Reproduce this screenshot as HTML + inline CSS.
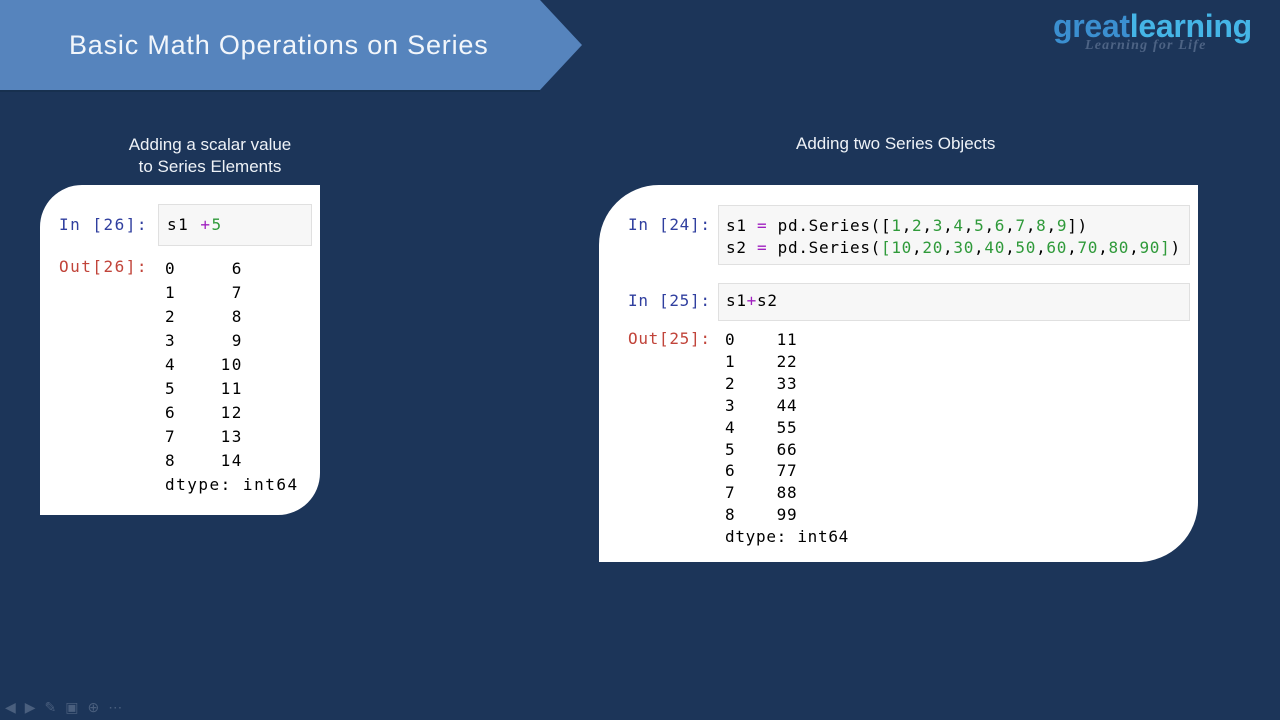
<!DOCTYPE html>
<html><head><style>
body{margin:0;width:1280px;height:720px;background:#1c3559;position:relative;overflow:hidden;font-family:"Liberation Sans",sans-serif}
.a{position:absolute}
.m{font-family:"DejaVu Sans Mono","Liberation Mono",monospace;font-size:16px;white-space:pre}
.L{letter-spacing:1.5px}.R{letter-spacing:0.7px}
.p{color:#303f9f}.o{color:#c1443a}.g{color:#2f9a3a}.v{color:#a020c0}
.cell{background:#f7f7f7;border:1px solid #e0e0e0}
</style></head><body>
<svg class="a" style="left:0;top:0" width="600" height="95"><polygon points="0,0 540,0 582,45 540,90 0,90" fill="#5684bd"/><line x1="0" y1="91" x2="540" y2="91" stroke="#17304f" stroke-width="2"/></svg>
<div class="a" style="left:69px;top:30px;font-size:27px;color:#f2f6fb;letter-spacing:0.8px">Basic Math Operations on Series</div>
<div class="a" style="left:1053px;top:8px;font-size:32px;font-weight:bold;letter-spacing:-0.3px"><span style="color:#3b8fd0">great</span><span style="color:#45b5e6">learning</span></div>
<div class="a" style="left:1085px;top:38px;font-size:14px;font-style:italic;font-family:'Liberation Serif',serif;color:#4d6384;letter-spacing:1.2px;font-weight:bold">Learning for Life</div>
<div class="a" style="left:100px;top:134px;width:220px;text-align:center;color:#eef2f7;font-size:17px;line-height:22px">Adding a scalar value<br>to Series Elements</div>
<div class="a" style="left:796px;top:134px;color:#eef2f7;font-size:17px">Adding two Series Objects</div>

<div class="a" style="left:40px;top:185px;width:280px;height:330px;background:#fff;border-radius:42px 0 42px 0"></div>
<div class="a cell" style="left:158px;top:204px;width:152px;height:40px"></div>
<div class="a m p L" style="left:59px;top:215px">In [26]:</div>
<div class="a m L" style="left:167px;top:215px">s1 <span class="v">+</span><span class="g">5</span></div>
<div class="a m o L" style="left:59px;top:257px">Out[26]:</div>
<div class="a m L" style="left:165px;top:257px;line-height:24px">0     6
1     7
2     8
3     9
4    10
5    11
6    12
7    13
8    14
dtype: int64</div>

<div class="a" style="left:599px;top:185px;width:599px;height:377px;background:#fff;border-radius:60px 0 60px 0"></div>
<div class="a cell" style="left:718px;top:205px;width:470px;height:58px"></div>
<div class="a m p R" style="left:628px;top:215px">In [24]:</div>
<div class="a m R" style="left:726px;top:215px;line-height:22px">s1 <span class="v">=</span> pd.Series([<span class="g">1</span>,<span class="g">2</span>,<span class="g">3</span>,<span class="g">4</span>,<span class="g">5</span>,<span class="g">6</span>,<span class="g">7</span>,<span class="g">8</span>,<span class="g">9</span>])
s2 <span class="v">=</span> pd.Series(<span class="g">[10</span>,<span class="g">20</span>,<span class="g">30</span>,<span class="g">40</span>,<span class="g">50</span>,<span class="g">60</span>,<span class="g">70</span>,<span class="g">80</span>,<span class="g">90]</span>)</div>
<div class="a cell" style="left:718px;top:283px;width:470px;height:36px"></div>
<div class="a m p R" style="left:628px;top:291px">In [25]:</div>
<div class="a m R" style="left:726px;top:291px">s1<span class="v">+</span>s2</div>
<div class="a m o R" style="left:628px;top:329px">Out[25]:</div>
<div class="a m R" style="left:725px;top:329px;line-height:21.9px">0    11
1    22
2    33
3    44
4    55
5    66
6    77
7    88
8    99
dtype: int64</div>
<div class="a" style="left:5px;top:699px;color:#4a5f7e;font-size:14px;letter-spacing:9px">◀▶✎▣⊕⋯</div>
</body></html>
